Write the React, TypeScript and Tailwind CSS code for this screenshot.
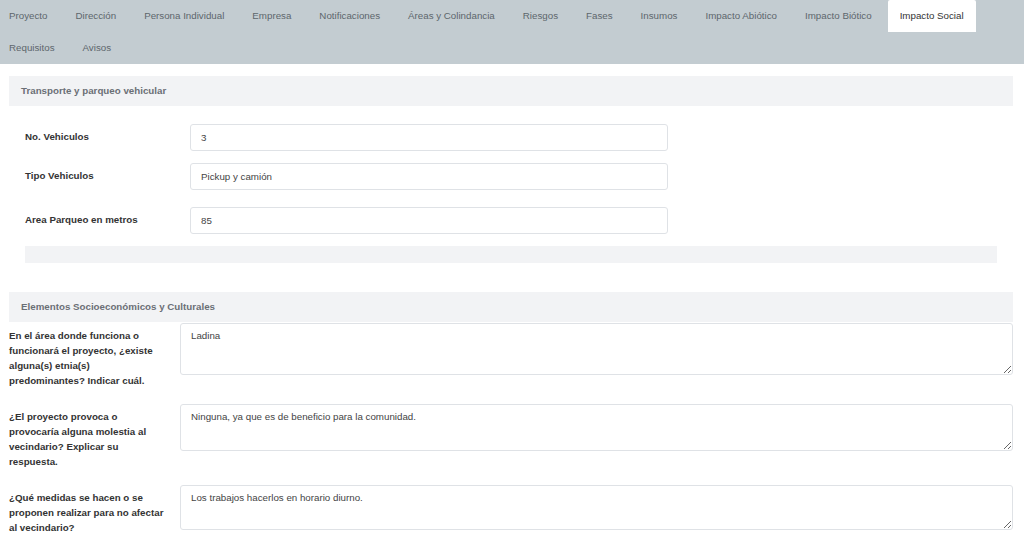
import React from 'react';

const tabs = [
  'Proyecto',
  'Dirección',
  'Persona Individual',
  'Empresa',
  'Notificaciones',
  'Áreas y Colindancia',
  'Riesgos',
  'Fases',
  'Insumos',
  'Impacto Abiótico',
  'Impacto Biótico',
  'Impacto Social',
  'Requisitos',
  'Avisos',
];

const active = 'Impacto Social';

const vehicleFields = [
  { label: 'No. Vehiculos', value: '3', mt: 'mt-[18px]' },
  { label: 'Tipo Vehiculos', value: 'Pickup y camión', mt: 'mt-[12px]' },
  { label: 'Area Parqueo en metros', value: '85', mt: 'mt-[17px]' },
];

const questions = [
  {
    label: 'En el área donde funciona o funcionará el proyecto, ¿existe alguna(s) etnia(s) predominantes? Indicar cuál.',
    value: 'Ladina',
    h: 'h-[52px]',
  },
  {
    label: '¿El proyecto provoca o provocaría alguna molestia al vecindario? Explicar su respuesta.',
    value: 'Ninguna, ya que es de beneficio para la comunidad.',
    h: 'h-[47px]',
  },
  {
    label: '¿Qué medidas se hacen o se proponen realizar para no afectar al vecindario?',
    value: 'Los trabajos hacerlos en horario diurno.',
    h: 'h-[45px]',
  },
];

function PanelHeader({ title }: { title: string }) {
  return (
    <div className="h-[30px] bg-[#f2f3f5] px-3 flex items-center font-bold text-[#6b6f75]">
      {title}
    </div>
  );
}

export default function App() {
  return (
    <div className="min-h-[541px] bg-white text-[9.75px] font-['Liberation_Sans',Arial,sans-serif]">
      <div className="bg-[#c3ccd1] h-16 overflow-hidden">
        <ul className="flex flex-wrap -ml-[3px] gap-x-[4px]">
          {tabs.map((t) => (
            <li
              key={t}
              className={
                t === active
                  ? 'h-8 px-3 flex items-center bg-white text-[#333] rounded-t-[2px]'
                  : 'h-8 px-3 flex items-center text-[#5d666c]'
              }
            >
              {t}
            </li>
          ))}
        </ul>
      </div>

      <div className="pl-[9px] pr-[11px]">
        <div className="mt-3">
          <PanelHeader title="Transporte y parqueo vehicular" />
          <div className="px-4">
            {vehicleFields.map((f) => (
              <div key={f.label} className={`${f.mt} flex items-center`}>
                <label className="w-[165px] font-bold text-[#333]">{f.label}</label>
                <input
                  readOnly
                  value={f.value}
                  className="w-[478px] h-[27px] border border-[#dfe2e6] rounded-[3px] px-[10px] text-[#444] outline-none"
                />
              </div>
            ))}
            <div className="mt-3 h-[17px] bg-[#f2f3f5]" />
          </div>
        </div>

        <div className="mt-[29px]">
          <PanelHeader title="Elementos Socioeconómicos y Culturales" />
          <div className="pt-px">
            {questions.map((q, i) => (
              <div key={i} className="flex items-start mb-4">
                <div className="w-[171px] shrink-0 pr-[14px] pt-[5px]">
                  <label className="block font-bold text-[#333] leading-[15px]">{q.label}</label>
                </div>
                <textarea
                  readOnly
                  defaultValue={q.value}
                  className={`flex-1 ${q.h} border border-[#dfe2e6] rounded-[3px] px-[10px] py-[5px] text-[#444] outline-none`}
                />
              </div>
            ))}
          </div>
        </div>
      </div>
    </div>
  );
}
